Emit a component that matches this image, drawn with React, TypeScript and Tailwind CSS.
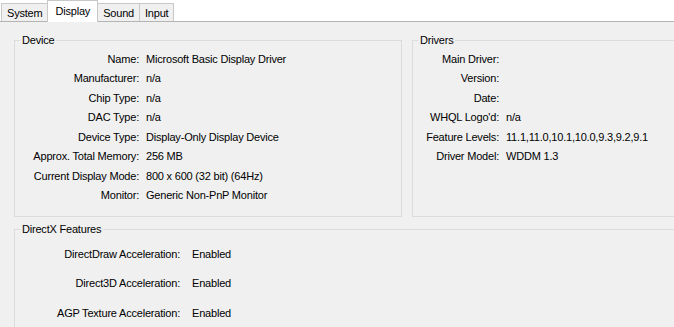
const tabs = ["System", "Display", "Sound", "Input"];

const device: [string, string][] = [
  ["Name:", "Microsoft Basic Display Driver"],
  ["Manufacturer:", "n/a"],
  ["Chip Type:", "n/a"],
  ["DAC Type:", "n/a"],
  ["Device Type:", "Display-Only Display Device"],
  ["Approx. Total Memory:", "256 MB"],
  ["Current Display Mode:", "800 x 600 (32 bit) (64Hz)"],
  ["Monitor:", "Generic Non-PnP Monitor"],
];

const drivers: [string, string][] = [
  ["Main Driver:", ""],
  ["Version:", ""],
  ["Date:", ""],
  ["WHQL Logo'd:", "n/a"],
  ["Feature Levels:", "11.1,11.0,10.1,10.0,9.3,9.2,9.1"],
  ["Driver Model:", "WDDM 1.3"],
];

const features: [string, string][] = [
  ["DirectDraw Acceleration:", "Enabled"],
  ["Direct3D Acceleration:", "Enabled"],
  ["AGP Texture Acceleration:", "Enabled"],
];

function GroupBox({ title, className, children }: { title: string; className: string; children: React.ReactNode }) {
  return (
    <fieldset className={`border border-[#dcdcdc] shrink-0 ${className}`}>
      <legend className="ml-[5px] px-[2px] leading-[14px]">{title}</legend>
      {children}
    </fieldset>
  );
}

export default function App() {
  return (
    <div className="w-[674px] h-[327px] overflow-hidden bg-white text-[11px] tracking-[-0.2px] text-black font-['Liberation_Sans',Arial,sans-serif]">
      {/* Tabs */}
      <div className="flex items-end h-[22px] pl-[1px] border-b border-[#b4b4b4]">
        {tabs.map((t, i) =>
          t === "Display" ? (
            <div
              key={t}
              className="relative z-10 -ml-px -mb-px h-[22px] px-[7px] pt-[1px] bg-white border border-b-0 border-[#c8c8c8] leading-[18px]"
            >
              {t}
            </div>
          ) : (
            <div
              key={t}
              className={`h-[18px] px-[5px] pt-[1px] bg-[#f0f0f0] border border-b-0 border-[#c8c8c8] leading-[17px] ${i > 0 ? "-ml-px" : ""}`}
            >
              {t}
            </div>
          )
        )}
      </div>

      {/* Page */}
      <div className="h-full bg-[#f0f0f0] pl-[14px] pt-[11px]">
        <div className="flex gap-[10px] w-[700px]">
          <GroupBox title="Device" className="w-[388px] h-[184px]">
            <div className="pt-[2px]">
              {device.map(([k, v]) => (
                <div key={k} className="flex items-center h-[19.5px] whitespace-nowrap">
                  <span className="w-[124px] text-right shrink-0">{k}</span>
                  <span className="pl-[7px]">{v}</span>
                </div>
              ))}
            </div>
          </GroupBox>
          <GroupBox title="Drivers" className="w-[280px] h-[184px]">
            <div className="pt-[2px]">
              {drivers.map(([k, v]) => (
                <div key={k} className="flex items-center h-[19.5px] whitespace-nowrap">
                  <span className="w-[86px] text-right shrink-0">{k}</span>
                  <span className="pl-[7px]">{v}</span>
                </div>
              ))}
            </div>
          </GroupBox>
        </div>

        <div className="mt-[5px] w-[700px]">
          <GroupBox title="DirectX Features" className="w-[700px] h-[120px]">
            <div className="pt-[3px]">
              {features.map(([k, v]) => (
                <div key={k} className="flex items-center h-[29.5px] whitespace-nowrap">
                  <span className="w-[165px] text-right shrink-0">{k}</span>
                  <span className="pl-[12px]">{v}</span>
                </div>
              ))}
            </div>
          </GroupBox>
        </div>
      </div>
    </div>
  );
}
